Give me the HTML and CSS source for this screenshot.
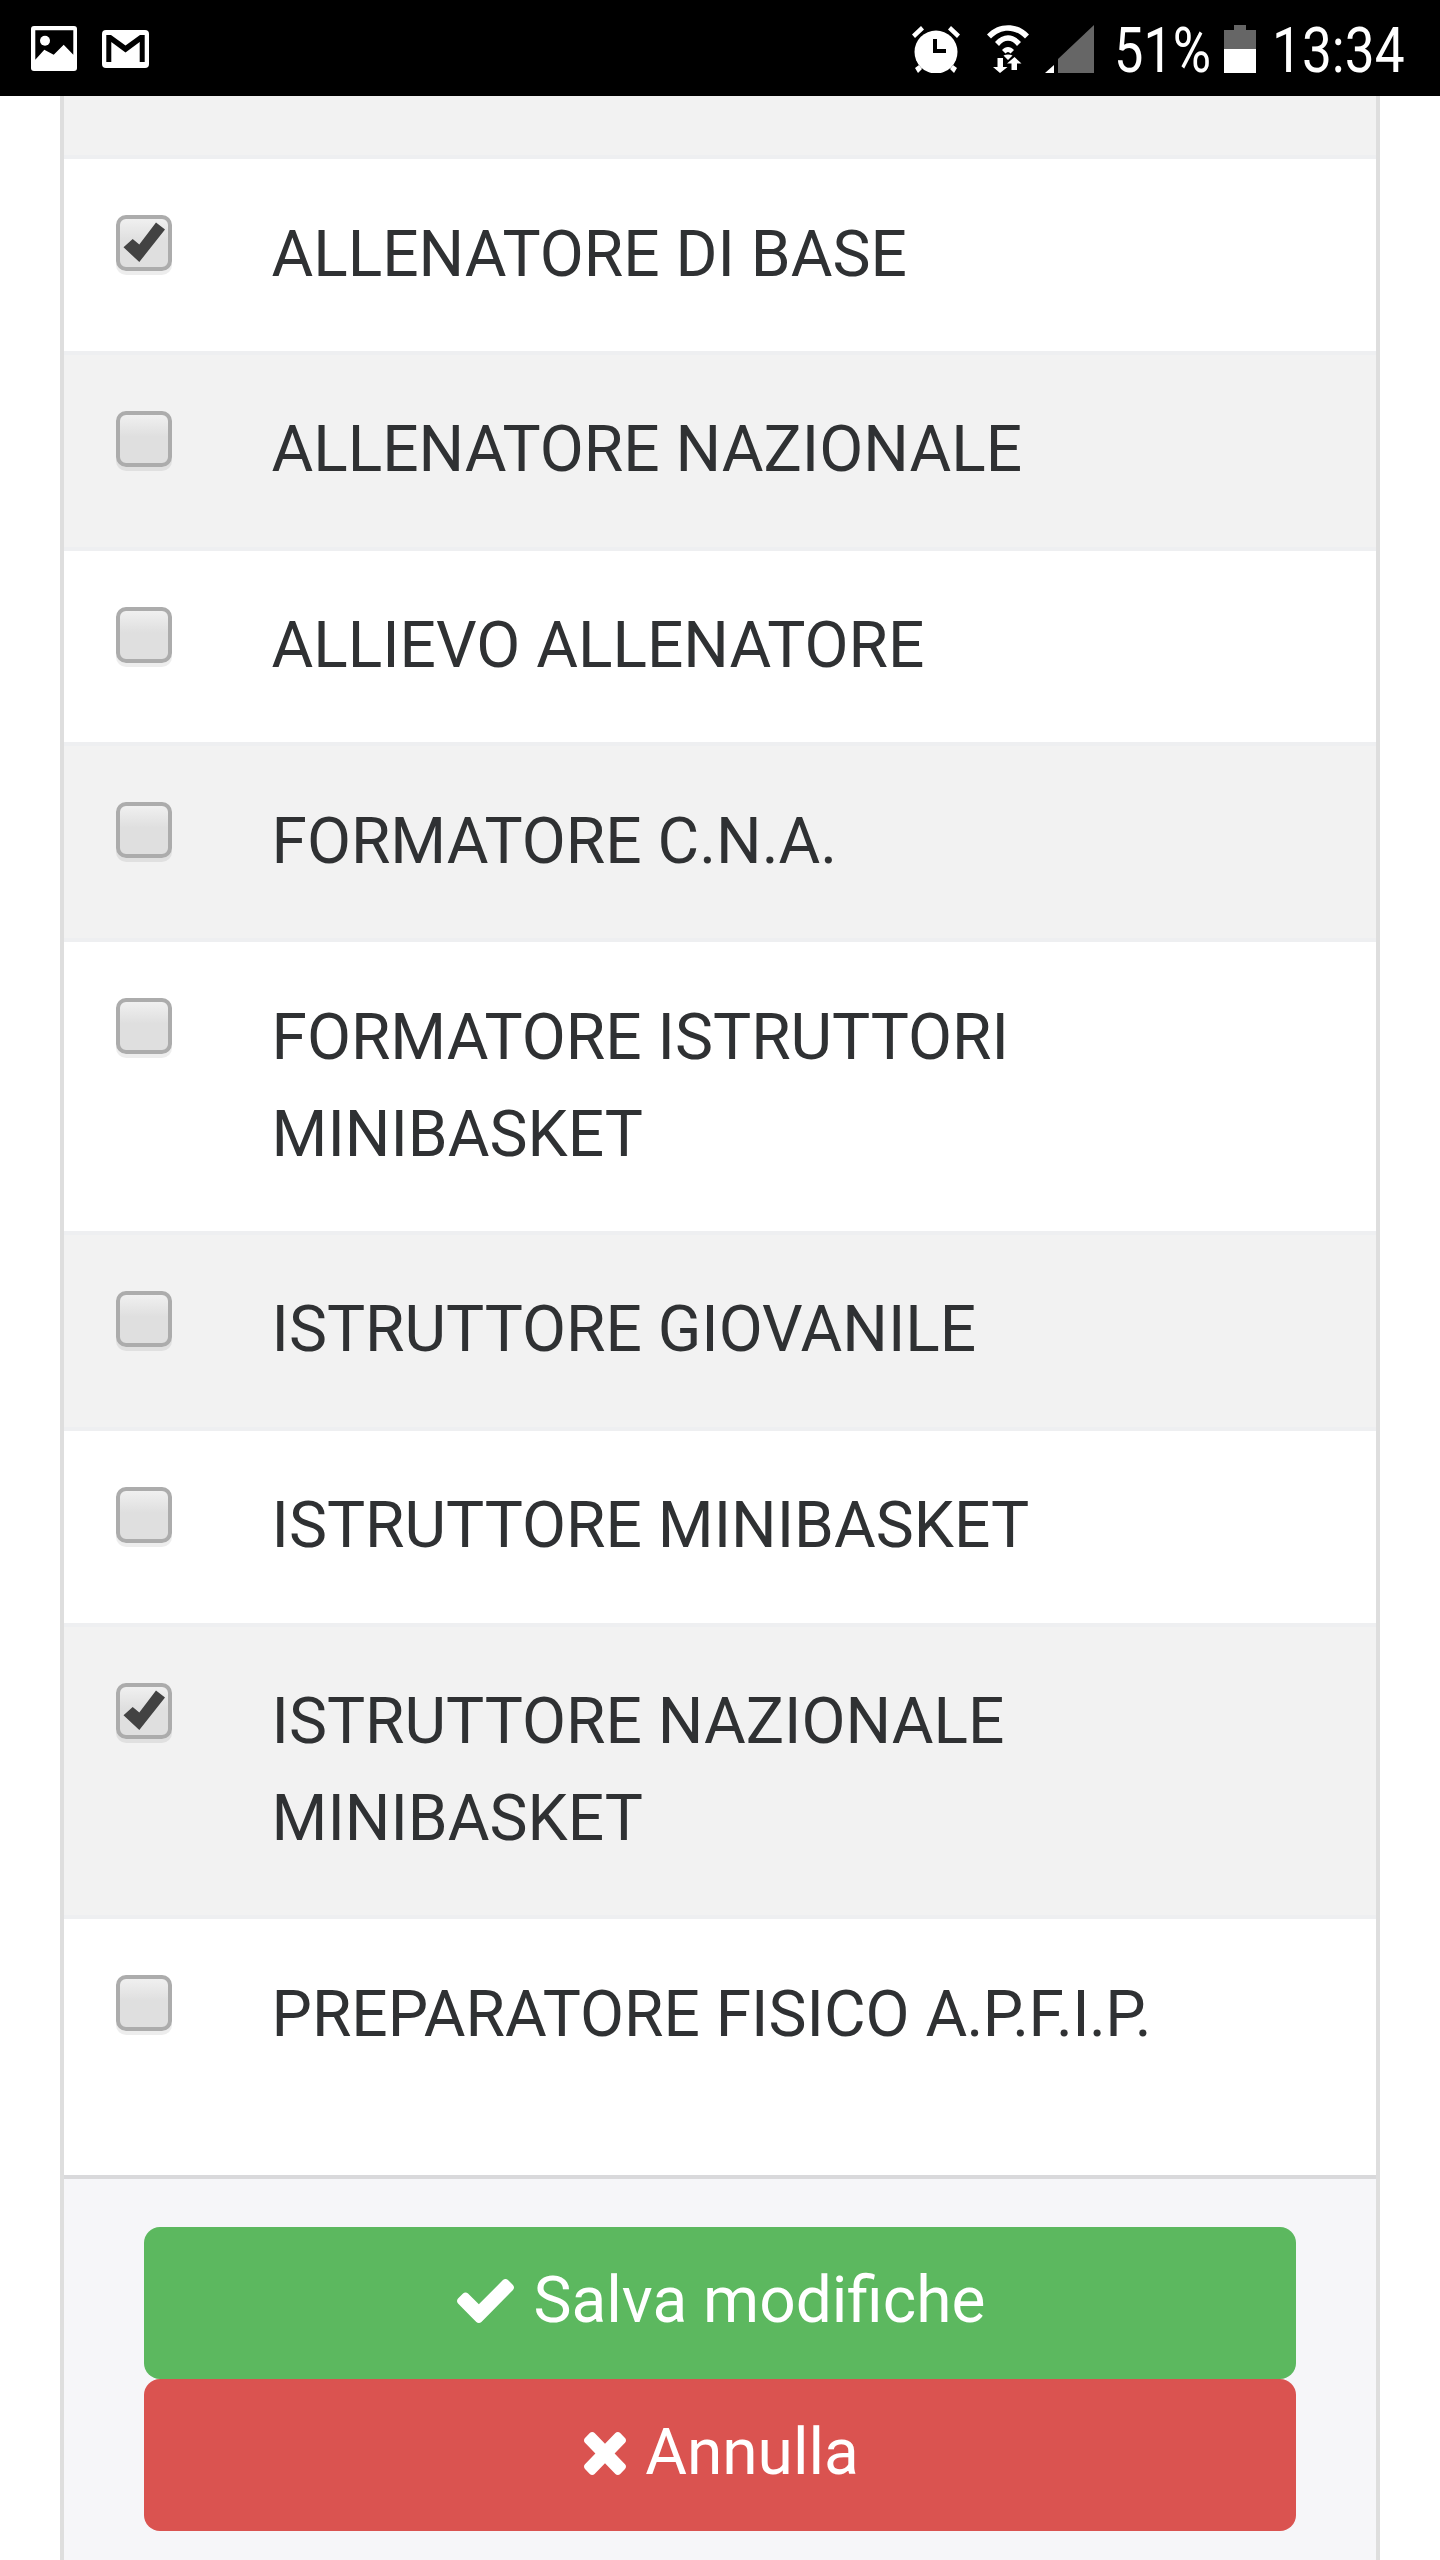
FILE: index.html
```html
<!DOCTYPE html>
<html lang="it">
<head>
<meta charset="utf-8">
<title>Qualifiche</title>
<link rel="stylesheet" href="styles.css">
</head>
<body>
<header class="status">
  <svg class="ic-image" viewBox="0 0 46 45"><rect width="46" height="45" rx="3" fill="#fff"/><path d="M4.300 4.300H42.300V28.700L32.700 18.700 22.700 28.700 13.300 23.700 4.300 33.700Z" fill="#000"/><circle cx="14" cy="14.700" r="5" fill="#fff"/></svg>
  <svg class="ic-mail" viewBox="0 0 47 38"><rect width="47" height="38" rx="4" fill="#fff"/><path d="M4.300 5H9L23.500 15.500 38 5H42.700V32H37.700V12L23.500 22.500 9.300 12V32H4.300Z" fill="#000"/></svg>
  <div class="status-right">
    <svg class="ic-alarm" viewBox="0 0 48 48"><circle cx="24" cy="27" r="21.500" fill="#fff"/><path d="M0 9.500 9 1 12 4.500 3 13ZM48 9.500 39 1 36 4.500 45 13ZM3 43 7 40 10 44 6 48ZM45 43 41 40 38 44 42 48Z" fill="#fff"/><path d="M21 14h4v10h9v4H21Z" fill="#000"/></svg>
    <svg class="ic-wifi" viewBox="0 0 42 48"><path d="M0 9.500C11-3 31-3 42 9.500l-4 4C28 3 14 3 4 13.500ZM8 17C16 8 26 8 34 17l-4 4C25 14 17 14 12 21ZM15 25C18.500 21 23.500 21 27 25l-3.500 3.500c-1.500-2-3.500-2-5 0ZM21 35l-4.500-4.500c3-1.500 6-1.500 9 0Z" fill="#fff"/><path d="M10.500 33h5.500v9h4.500l-7.500 6-7-6h4.500ZM27.500 32l7 6.500h-4.500V45h-5.500v-6.500h-4.500Z" fill="#fff"/></svg>
    <svg class="ic-signal" viewBox="0 0 49 48"><path d="M49 0V48H13V34Z" fill="#666"/><path d="M0 48 9 40V48Z" fill="#fff"/></svg>
    <span class="pct">51%</span>
    <svg class="ic-batt" viewBox="0 0 32 48"><path d="M10 0H22V5H32V24H0V5H10Z" fill="#666"/><rect y="24" width="32" height="24" fill="#fff"/></svg>
    <span class="clock">13:34</span>
  </div>
</header>
<main class="panel">
  <div class="stripe"></div>
  <ul class="list">
    <li class="row"><span class="box"><svg viewBox="4 4 48 48"><path d="M7.500 32.300 16.700 24 23.300 29.500 40 7.500 49 14.500 23.300 47Z"/></svg></span><span class="label">ALLENATORE DI BASE</span></li>
    <li class="row alt"><span class="box"></span><span class="label">ALLENATORE NAZIONALE</span></li>
    <li class="row"><span class="box"></span><span class="label">ALLIEVO ALLENATORE</span></li>
    <li class="row alt"><span class="box"></span><span class="label">FORMATORE C.N.A.</span></li>
    <li class="row"><span class="box"></span><span class="label">FORMATORE ISTRUTTORI MINIBASKET</span></li>
    <li class="row alt"><span class="box"></span><span class="label">ISTRUTTORE GIOVANILE</span></li>
    <li class="row"><span class="box"></span><span class="label">ISTRUTTORE MINIBASKET</span></li>
    <li class="row alt"><span class="box"><svg viewBox="4 4 48 48"><path d="M7.500 32.300 16.700 24 23.300 29.500 40 7.500 49 14.500 23.300 47Z"/></svg></span><span class="label">ISTRUTTORE NAZIONALE MINIBASKET</span></li>
    <li class="row last"><span class="box"></span><span class="label">PREPARATORE FISICO <span class="tight">A.P.F.I.P.</span></span></li>
  </ul>
  <footer class="actions">
    <button class="btn save"><svg class="i-check" viewBox="121 334 1550 1188" preserveAspectRatio="none"><path d="M1671 566q0 40-28 68l-724 724-136 136q-28 28-68 28t-68-28l-136-136-362-362q-28-28-28-68t28-68l136-136q28-28 68-28t68 28l294 295 656-657q28-28 68-28t68 28l136 136q28 28 28 68z"/></svg>Salva modifiche</button>
    <button class="btn cancel"><svg class="i-times" viewBox="110 246 1188 1188" preserveAspectRatio="none"><path d="M1298 1202q0 40-28 68l-136 136q-28 28-68 28t-68-28l-294-294-294 294q-28 28-68 28t-68-28l-136-136q-28-28-28-68t28-68l294-294-294-294q-28-28-28-68t28-68l136-136q28-28 68-28t68 28l294 294 294-294q28-28 68-28t68 28l136 136q28 28 28 68t-28 68l-294 294 294 294q28 28 28 68z"/></svg>Annulla</button>
  </footer>
</main>
</body>
</html>
```
FILE: styles.css
```css
* { box-sizing: border-box; }
html, body { margin: 0; padding: 0; height: 2560px; overflow: hidden; background: #fff; }
body { font-family: Roboto, "Liberation Sans", sans-serif; color: #2f3133; }

.status { height: 96px; background: #000; display: flex; align-items: flex-start; padding-left: 31px; color: #fff; }
.ic-image { width: 46px; height: 45px; margin-top: 26px; }
.ic-mail { width: 47px; height: 38px; margin-top: 30px; margin-left: 25px; }
.status-right { margin-left: auto; width: 530px; height: 96px; position: relative; }
.status-right > * { position: absolute; }
.ic-alarm { left: 2px; top: 25px; width: 48px; height: 48px; }
.ic-wifi { left: 77px; top: 25px; width: 42px; height: 48px; }
.ic-signal { left: 135px; top: 25px; width: 49px; height: 48px; }
.ic-batt { left: 314px; top: 25px; width: 32px; height: 48px; }
.pct, .clock { font-size: 63px; line-height: 60px; font-weight: 400; top: 21px; transform-origin: left top; white-space: nowrap; }
.pct { left: 204px; transform: scaleX(0.83); }
.clock { left: 362px; transform: scaleX(0.845); }

.panel { width: 1320px; margin: 0 auto; border-left: 4px solid #dedede; border-right: 4px solid #dedede; height: 2464px; background: #f6f6f9; }
.stripe { height: 59px; background: #f2f2f2; }
.list { list-style: none; margin: 0; padding: 0; }
.row { display: flex; align-items: flex-start; background: #fff; border-top: 4px solid #eeeff1; padding: 56px 48px 48.300px 52px; }
.row.alt { background: #f2f2f2; }
.row.last { padding-bottom: 112.100px; }
.box { flex: none; width: 56px; height: 56px; border: 4px solid #acacac; border-radius: 10px; background: linear-gradient(#f0f0f0 0, #dfdfdf 45%); box-shadow: 0 4px 0 rgba(0, 0, 0, .07); }
.box svg { display: block; width: 48px; height: 48px; fill: #424242; overflow: visible; }
.label { margin-left: 99.500px; margin-top: -9.500px; font-size: 64px; line-height: 97px; }
.tight { letter-spacing: -0.650px; }

.actions { border-top: 4px solid #d9d9db; padding: 48px 80px 0; }
.btn { display: flex; align-items: center; justify-content: center; width: 100%; height: 152px; border: 0; border-radius: 16px; padding: 0 0 3px 3px; font-family: inherit; font-size: 64px; line-height: 1; color: #fff; }
.btn svg { fill: #fff; margin-right: 19px; }
.save { background: #5cb85f; }
.cancel { background: #da5350; }
.i-check { width: 57px; height: 44px; }
.i-times { width: 42px; height: 43px; }
```
